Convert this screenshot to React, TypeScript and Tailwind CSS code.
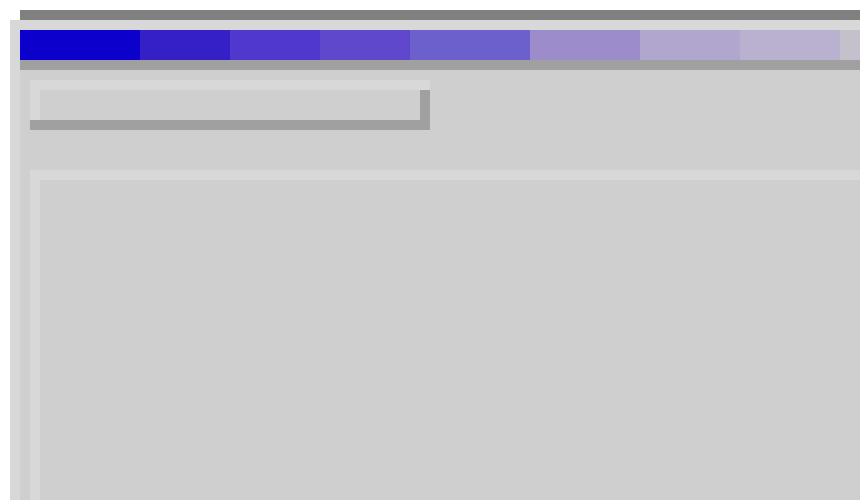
import React from "react";

const segs: { w: string; c: string }[] = [
  { w: "w-[120px]", c: "bg-[#0b00cc]" },
  { w: "w-[90px]", c: "bg-[#3520c8]" },
  { w: "w-[90px]", c: "bg-[#5038ce]" },
  { w: "w-[90px]", c: "bg-[#6048cc]" },
  { w: "w-[120px]", c: "bg-[#6c60cc]" },
  { w: "w-[110px]", c: "bg-[#9c8ccc]" },
  { w: "w-[100px]", c: "bg-[#b1a6ce]" },
  { w: "w-[100px]", c: "bg-[#bab1d0]" },
  { w: "flex-1", c: "bg-[#c4c0cc]" },
];

export default function App() {
  return (
    <div className="w-[860px] h-[500px] overflow-hidden bg-white pt-[10px] pl-[10px] flex flex-col">
      <div className="ml-[10px] h-[10px] shrink-0 bg-[#808080]" />
      <div className="flex-1 flex flex-col border-t-[10px] border-l-[10px] border-[#d8d8d8] bg-[#cfcfcf] min-h-0">
        <div className="flex h-[30px] shrink-0">
          {segs.map((s, i) => (
            <div key={i} className={`${s.w} ${s.c} h-full`} />
          ))}
        </div>
        <div className="h-[10px] shrink-0 bg-[#a0a0a0]" />
        <div className="flex-1 flex flex-col pl-[10px] pt-[10px] min-h-0">
          <div className="w-[400px] h-[50px] shrink-0 bg-[#a0a0a0] flex flex-col">
            <div className="h-[10px] bg-[#d8d8d8]" />
            <div className="w-[390px] h-[30px] border-l-[10px] border-[#d8d8d8] bg-[#cfcfcf]" />
          </div>
          <div className="mt-[40px] flex-1 border-t-[10px] border-l-[10px] border-[#d8d8d8] bg-[#cfcfcf]" />
        </div>
      </div>
    </div>
  );
}
